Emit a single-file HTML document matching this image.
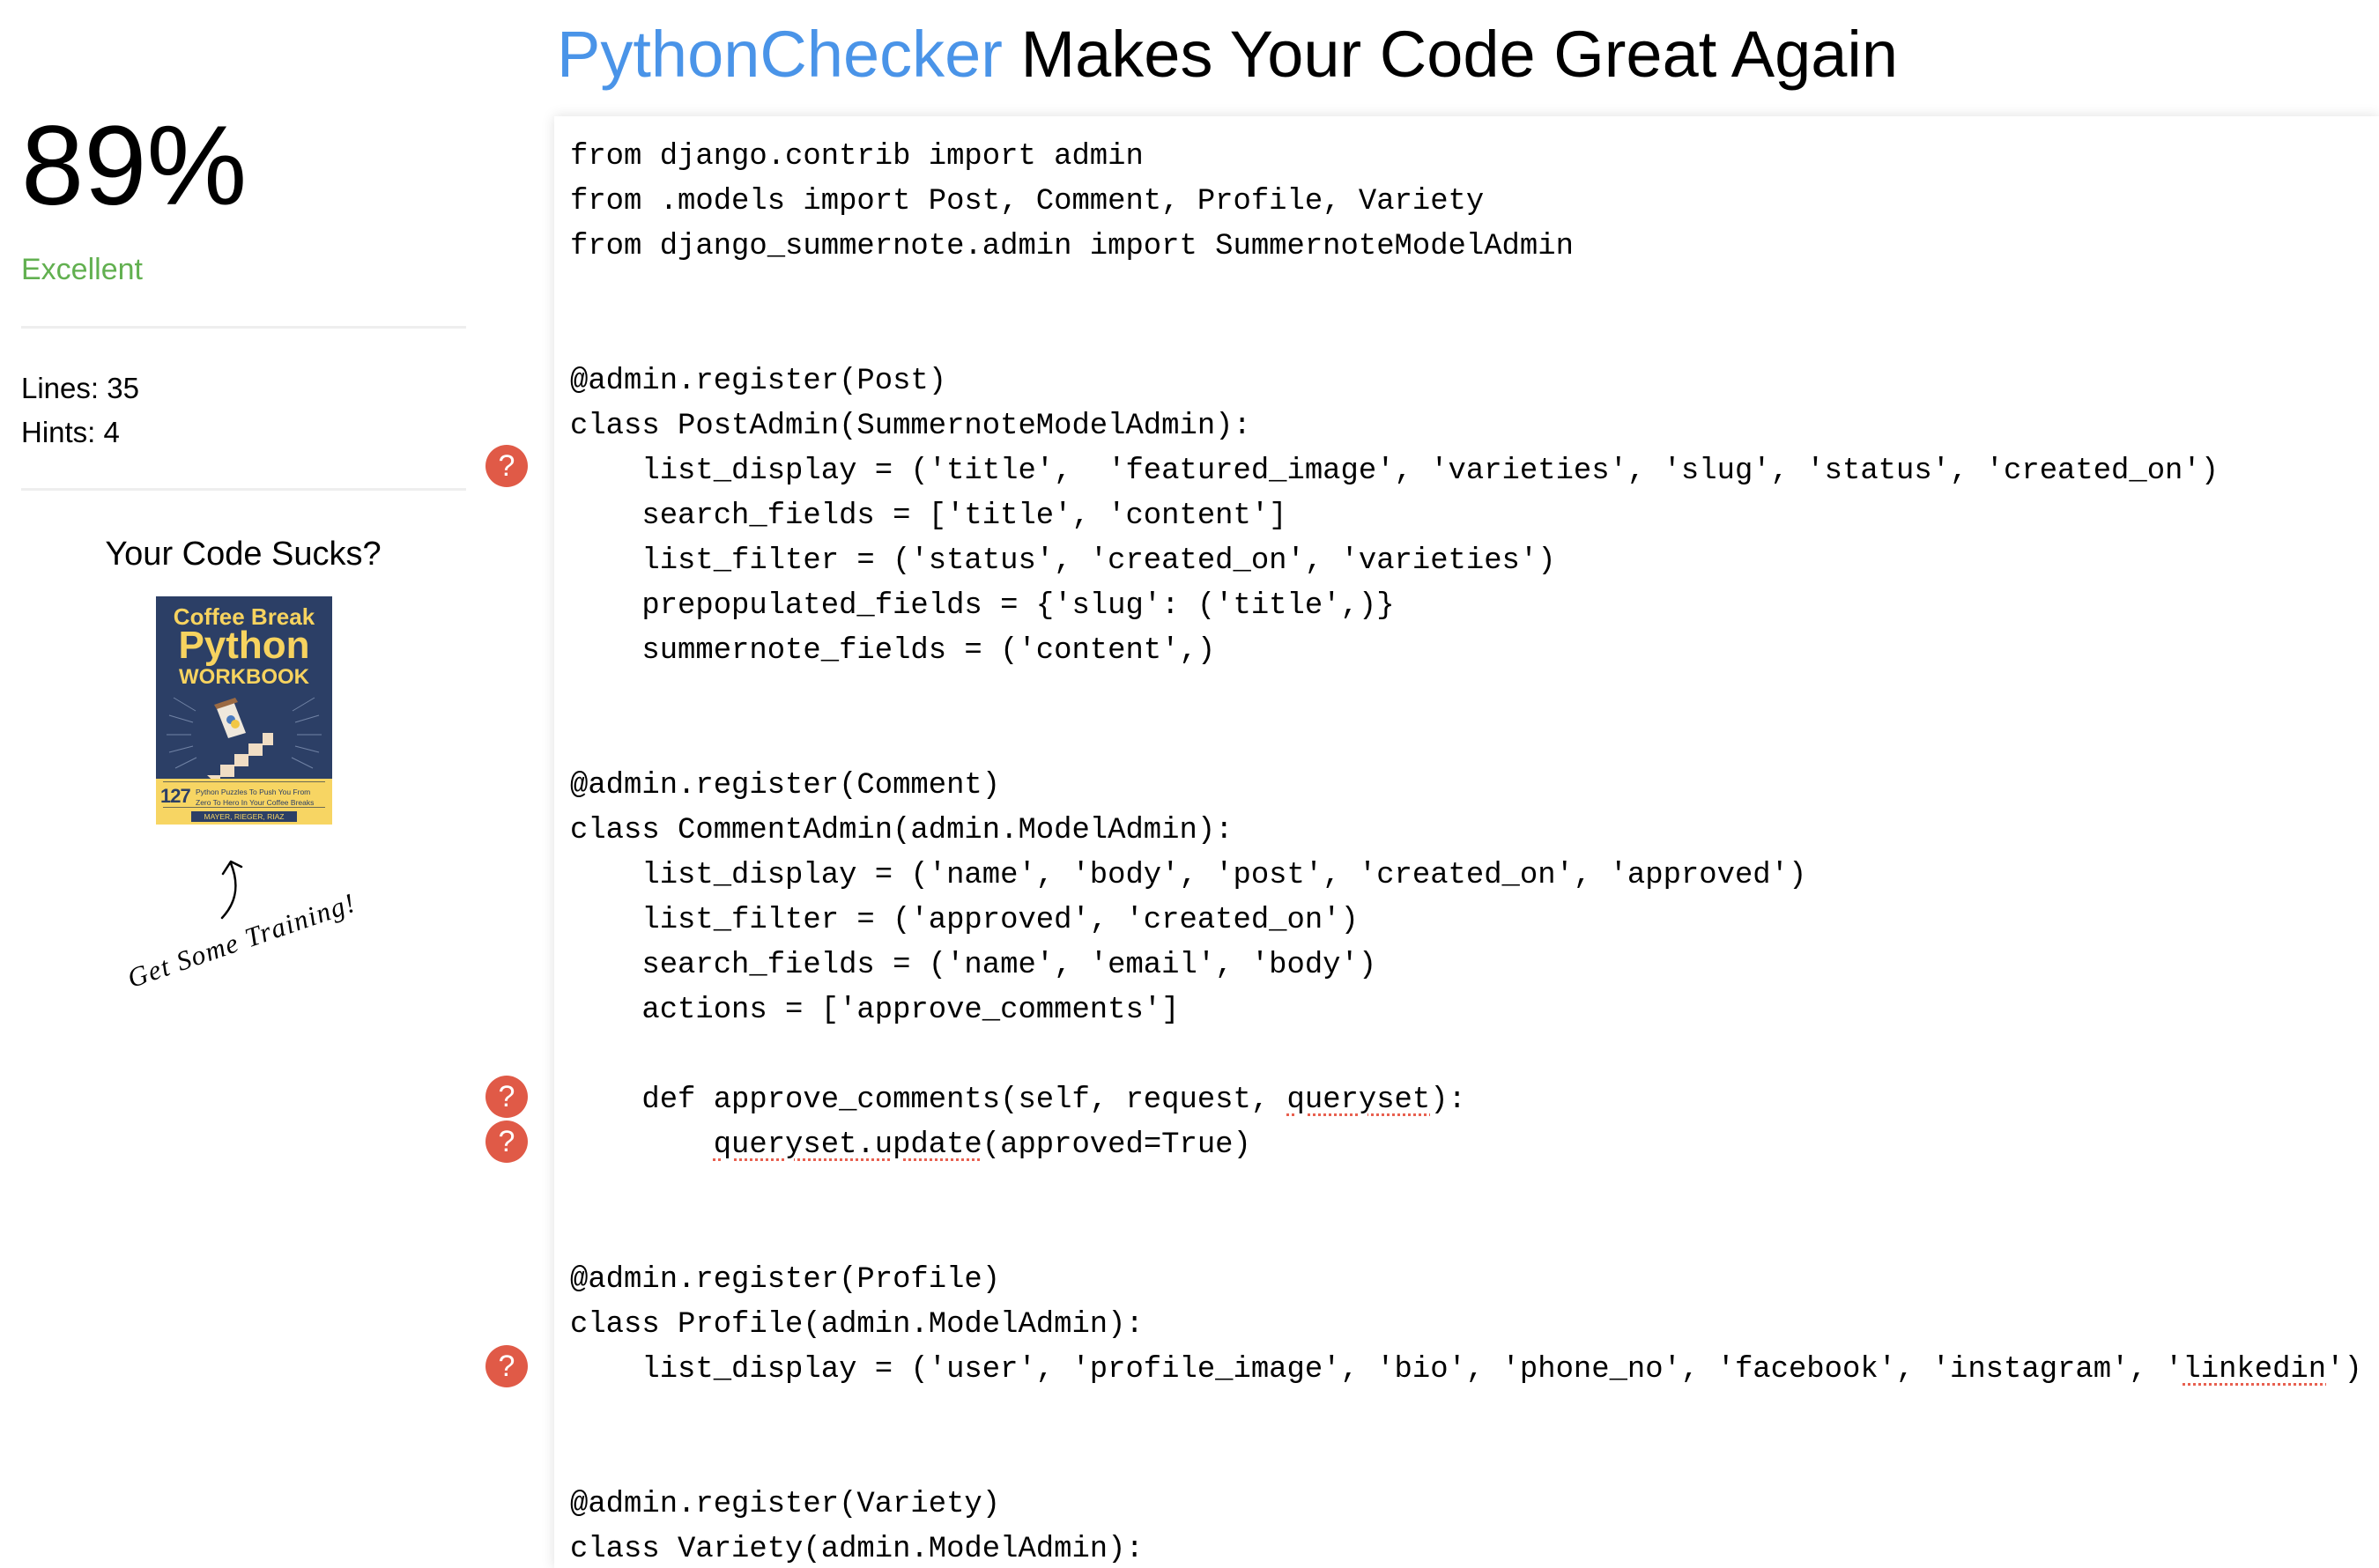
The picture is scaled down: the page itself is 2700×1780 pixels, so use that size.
<!DOCTYPE html>
<html><head><meta charset="utf-8"><style>
html,body{margin:0;padding:0;background:#fff;width:2700px;height:1780px;overflow:hidden;position:relative;font-family:"Liberation Sans",sans-serif;color:#000}
.a{position:absolute;white-space:pre;line-height:1}
.hr{position:absolute;left:24px;width:505px;height:3px;background:#eeeeee}
.q{position:absolute;left:551px;width:48px;height:48px;border-radius:50%;background:#e05a47;color:#fff;font:34px/48px "Liberation Sans",sans-serif;text-align:center}
#panel{position:absolute;left:629px;top:132px;width:2071px;height:1648px;background:#fff;box-shadow:0 0 14px rgba(0,0,0,.13)}
#code{position:absolute;left:647px;top:153px;font-family:"Liberation Mono",monospace;font-size:33.9px;line-height:51px;white-space:pre;color:#000}
.u{text-decoration:underline dotted #e8604f;text-decoration-thickness:3px;text-underline-offset:7px}
</style></head><body>
<div class="a" style="left:632px;top:25px;font-size:74px"><span style="color:#4a94e8">PythonChecker</span> Makes Your Code Great Again</div>

<div class="a" style="left:24px;top:125px;font-size:128px">89%</div>
<div class="a" style="left:24px;top:289px;font-size:34px;color:#62b050">Excellent</div>
<div class="hr" style="top:370px"></div>
<div class="a" style="left:24px;top:424px;font-size:33px">Lines: 35</div>
<div class="a" style="left:24px;top:474px;font-size:33px">Hints: 4</div>
<div class="hr" style="top:554px"></div>
<div class="a" style="left:0;width:552px;text-align:center;top:610px;font-size:38px">Your Code Sucks?</div>

<div style="position:absolute;left:177px;top:677px;width:200px;height:259px;background:#2c3f66;overflow:hidden">
 <div class="a" style="left:0;width:200px;text-align:center;top:10px;font-size:26px;font-weight:bold;color:#f7d35f">Coffee Break</div>
 <div class="a" style="left:0;width:200px;text-align:center;top:34px;font-size:44px;font-weight:bold;color:#f7d35f">Python</div>
 <div class="a" style="left:0;width:200px;text-align:center;top:80px;font-size:24px;font-weight:bold;color:#f7d35f">WORKBOOK</div>
 <svg style="position:absolute;left:0;top:105px" width="200" height="102" viewBox="0 0 200 102">
  <g stroke="#8fa0c0" stroke-width="1" opacity=".7">
   <line x1="20" y1="10" x2="45" y2="25"/><line x1="15" y1="30" x2="42" y2="38"/><line x1="12" y1="52" x2="40" y2="52"/><line x1="15" y1="72" x2="42" y2="65"/><line x1="22" y1="90" x2="46" y2="78"/>
   <line x1="180" y1="10" x2="155" y2="25"/><line x1="185" y1="30" x2="158" y2="38"/><line x1="188" y1="52" x2="160" y2="52"/><line x1="185" y1="72" x2="158" y2="65"/><line x1="178" y1="90" x2="154" y2="78"/>
  </g>
  <path d="M58 98 h15 v-12 h16 v-12 h16 v-12 h16 v-12 h12 v14 h-12 v12 h-16 v12 h-16 v12 h-16 v12 z" fill="#f0ddc4"/>
  <path d="M68 20 l20 -6 l14 36 l-20 6 z" fill="#efe8dc"/>
  <path d="M66 18 l24 -8 l3 5 l-24 8 z" fill="#9b6a43"/>
  <circle cx="85" cy="35" r="5" fill="#4a7bc0"/><circle cx="90" cy="40" r="5" fill="#f2c744"/>
 </svg>
 <div style="position:absolute;left:0;top:207px;width:200px;height:52px;background:#f7d563">
  <div style="position:absolute;left:8px;right:8px;top:3px;height:1px;background:#6b6a55"></div>
  <div class="a" style="left:5px;top:9px;font-size:22px;font-weight:bold;color:#2c3f66;letter-spacing:-1px">127</div>
  <div class="a" style="left:45px;top:9px;font-size:8.5px;color:#2c3f66;line-height:12px">Python Puzzles To Push You From
Zero To Hero In Your Coffee Breaks</div>
  <div style="position:absolute;left:8px;right:8px;top:32px;height:1px;background:#6b6a55"></div>
  <div class="a" style="left:40px;width:120px;top:37px;height:12px;background:#2c3f66;color:#f7d563;font-size:8.5px;line-height:12px;text-align:center">MAYER, RIEGER, RIAZ</div>
 </div>
</div>

<svg style="position:absolute;left:240px;top:970px" width="50" height="80" viewBox="0 0 50 80">
 <path d="M12 72 C28 55 32 35 22 10 M13 22 L22 8 L34 14" fill="none" stroke="#000" stroke-width="2.5" stroke-linecap="round" stroke-linejoin="round"/>
</svg>
<div class="a" style="left:146px;top:1094px;font:italic 31px 'Liberation Serif',serif;transform:rotate(-19deg);transform-origin:left center;letter-spacing:1.5px">Get Some Training!</div>

<div class="q" style="top:505px">?</div>
<div class="q" style="top:1221px">?</div>
<div class="q" style="top:1272px">?</div>
<div class="q" style="top:1527px">?</div>

<div id="panel"></div>
<div id="code">from django.contrib import admin
from .models import Post, Comment, Profile, Variety
from django_summernote.admin import SummernoteModelAdmin


@admin.register(Post)
class PostAdmin(SummernoteModelAdmin):
    list_display = ('title',  'featured_image', 'varieties', 'slug', 'status', 'created_on')
    search_fields = ['title', 'content']
    list_filter = ('status', 'created_on', 'varieties')
    prepopulated_fields = {'slug': ('title',)}
    summernote_fields = ('content',)


@admin.register(Comment)
class CommentAdmin(admin.ModelAdmin):
    list_display = ('name', 'body', 'post', 'created_on', 'approved')
    list_filter = ('approved', 'created_on')
    search_fields = ('name', 'email', 'body')
    actions = ['approve_comments']

    def approve_comments(self, request, <span class="u">queryset</span>):
        <span class="u">queryset.update</span>(approved=True)


@admin.register(Profile)
class Profile(admin.ModelAdmin):
    list_display = ('user', 'profile_image', 'bio', 'phone_no', 'facebook', 'instagram', '<span class="u">linkedin</span>')


@admin.register(Variety)
class Variety(admin.ModelAdmin):</div>
</body></html>
